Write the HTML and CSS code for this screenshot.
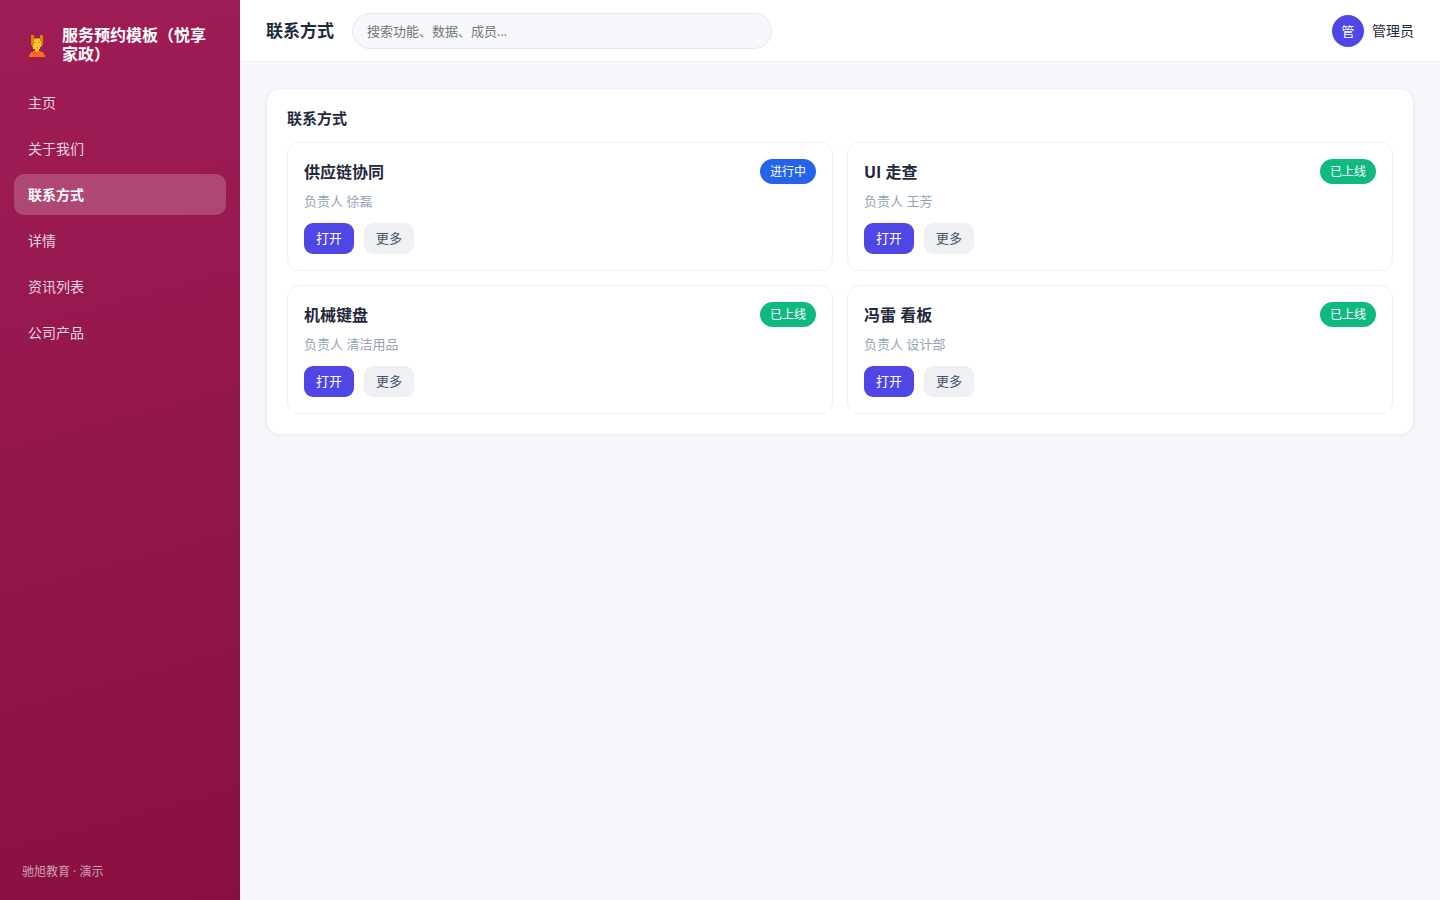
FILE: index.html
```html
<!DOCTYPE html>
<html lang="zh-CN">
  <head>
    <meta charset="UTF-8" />
    <title>联系方式</title>
    <meta name="viewport" content="width=device-width, initial-scale=1.0" />
    <link rel="stylesheet" href="styles.css">
  </head>
  <body>
    <aside class="sidebar">
      <div class="brand">
        <svg class="logo" viewBox="0 0 18 24" shape-rendering="crispEdges" aria-hidden="true">
          <path fill="#ff6a1f" d="M1 24v-2h1v-2h1v-1h2v-1h8v1h2v1h1v2h1v2z" />
          <path fill="#d9850c" d="M3 2h3v3h6V2h3v10h-1v2H4v-2H3z" />
          <path fill="#fcc531" d="M6 7h1V6h5v2h1v6h-1v2h-1v2h-1v1H8v-1H7v-2H5v-4h1z" />
          <path fill="#e39a1a" d="M6 9h2v1H6zM10 9h2v1h-2zM8 14h2v1H8z" />
        </svg>
        <span>服务预约模板（悦享家政）</span>
      </div>
      <nav class="menu">
        <a href="#">主页</a>
        <a href="#">关于我们</a>
        <a href="#" class="active">联系方式</a>
        <a href="#">详情</a>
        <a href="#">资讯列表</a>
        <a href="#">公司产品</a>
      </nav>
      <div class="side-foot">驰旭教育 · 演示</div>
    </aside>

    <div class="main">
      <header class="topbar">
        <h1>联系方式</h1>
        <input type="search" class="search" aria-label="搜索" placeholder="搜索功能、数据、成员..." />
        <div class="user">
          <span class="avatar">管</span>
          <span>管理员</span>
        </div>
      </header>

      <main class="content">
        <section class="panel">
          <h2>联系方式</h2>
          <div class="grid">
            <article class="item">
              <div class="item-head">
                <h3>供应链协同</h3>
                <span class="tag blue">进行中</span>
              </div>
              <p>负责人 徐磊</p>
              <div class="actions">
                <button class="btn primary">打开</button>
                <button class="btn">更多</button>
              </div>
            </article>
            <article class="item">
              <div class="item-head">
                <h3>UI 走查</h3>
                <span class="tag green">已上线</span>
              </div>
              <p>负责人 王芳</p>
              <div class="actions">
                <button class="btn primary">打开</button>
                <button class="btn">更多</button>
              </div>
            </article>
            <article class="item">
              <div class="item-head">
                <h3>机械键盘</h3>
                <span class="tag green">已上线</span>
              </div>
              <p>负责人 清洁用品</p>
              <div class="actions">
                <button class="btn primary">打开</button>
                <button class="btn">更多</button>
              </div>
            </article>
            <article class="item">
              <div class="item-head">
                <h3>冯雷 看板</h3>
                <span class="tag green">已上线</span>
              </div>
              <p>负责人 设计部</p>
              <div class="actions">
                <button class="btn primary">打开</button>
                <button class="btn">更多</button>
              </div>
            </article>
          </div>
        </section>
      </main>
    </div>
  </body>
</html>
```
FILE: styles.css
```css
* {
  box-sizing: border-box;
}

body {
  margin: 0;
  display: flex;
  min-height: 100vh;
  font-family: "Open Sans", "Noto Sans CJK SC", sans-serif;
  font-size: 14px;
  line-height: 20px;
  background: #f5f7fb;
  color: #1e293b;
}

h1,
h2,
h3,
p {
  margin: 0;
}

input,
button {
  font-family: inherit;
}

.sidebar {
  width: 240px;
  flex-shrink: 0;
  display: flex;
  flex-direction: column;
  padding: 26px 14px 18px;
  background: linear-gradient(165deg, #9f1d56, #881040);
  color: #fff;
}

.brand {
  display: flex;
  align-items: center;
  gap: 16px;
  padding: 0 14px;
  margin-bottom: 18px;
  font-size: 16px;
  font-weight: 700;
  line-height: 19px;
}

.logo {
  width: 18px;
  height: 24px;
  flex-shrink: 0;
}

.menu {
  display: flex;
  flex-direction: column;
  gap: 5px;
}

.menu a {
  padding: 11px 14px;
  border-radius: 10px;
  line-height: 19px;
  color: rgba(255, 255, 255, 0.82);
  text-decoration: none;
}

.menu a.active {
  background: rgba(255, 255, 255, 0.2);
  color: #fff;
  font-weight: 700;
}

.side-foot {
  margin-top: auto;
  padding: 0 8px;
  font-size: 12px;
  color: rgba(255, 255, 255, 0.6);
}

.main {
  flex: 1;
  min-width: 0;
}

.topbar {
  display: flex;
  align-items: center;
  gap: 18px;
  height: 62px;
  padding: 0 26px;
  background: #fff;
  border-bottom: 1px solid #eef0f4;
}

.topbar h1 {
  font-size: 17px;
  white-space: nowrap;
}

.search {
  flex: 0 1 420px;
  min-width: 0;
  height: 36px;
  padding: 0 14px;
  border: 1px solid #e5e7ef;
  border-radius: 18px;
  background: #f7f8fc;
  font-size: 13px;
  outline: none;
  appearance: none;
}

.search::placeholder {
  color: #757575;
}

.user {
  display: flex;
  align-items: center;
  gap: 8px;
  margin-left: auto;
  white-space: nowrap;
}

.avatar {
  width: 32px;
  height: 32px;
  border-radius: 50%;
  background: #4f46e5;
  color: #fff;
  font-size: 13px;
  line-height: 32px;
  text-align: center;
}

.content {
  padding: 26px;
}

.panel {
  padding: 19px 20px 20px;
  border: 1px solid #eef0f4;
  border-radius: 14px;
  background: #fff;
  box-shadow: 0 1px 4px rgba(30, 41, 90, 0.05);
}

.panel h2 {
  margin-bottom: 14px;
  font-size: 15px;
}

.grid {
  display: grid;
  grid-template-columns: 1fr 1fr;
  gap: 14px;
}

.item {
  padding: 16px;
  border: 1px solid #eef0f4;
  border-radius: 12px;
}

.item-head {
  display: flex;
  align-items: center;
  justify-content: space-between;
}

.item h3 {
  font-size: 16px;
}

.item p {
  margin: 7px 0 12px;
  font-size: 13px;
  color: #94a3b8;
}

.tag {
  padding: 0 10px;
  border-radius: 13px;
  font-size: 12px;
  line-height: 25px;
  color: #fff;
}

.blue {
  background: #2563eb;
}

.green {
  background: #10b981;
}

.actions {
  display: flex;
  gap: 10px;
}

.btn {
  height: 31px;
  padding: 0 12px 2px;
  border: none;
  border-radius: 9px;
  background: #eef0f4;
  color: #475569;
  font-size: 13px;
  cursor: pointer;
}

.btn.primary {
  background: #4f46e5;
  color: #fff;
}
```
